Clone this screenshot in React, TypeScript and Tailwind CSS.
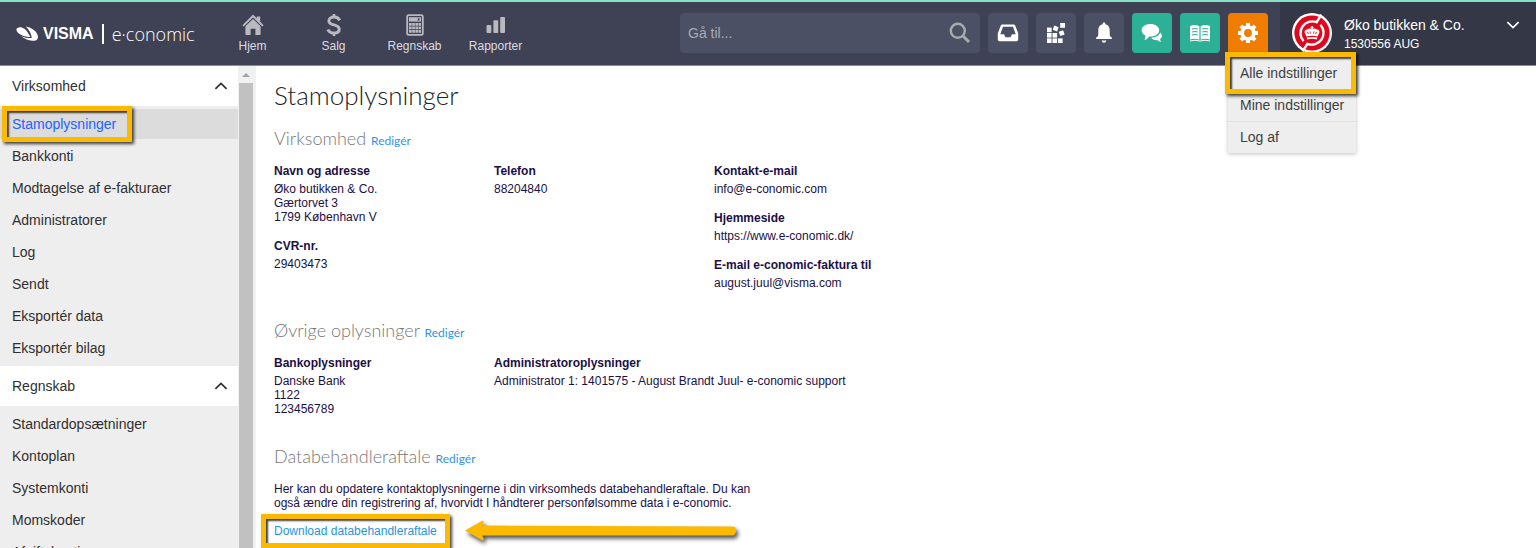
import React from "react";

type IconProps = { className?: string };

const HomeIcon = () => (
  <svg width="22" height="22" viewBox="0 0 22 22" fill="currentColor">
    <path d="M11 0.5 14.8 4.3V2.6H18.2V7.7L21.6 11.2 20.3 12.5 11 3.4 1.7 12.5 0.4 11.2Z" />
    <path d="M11 4.9 18.6 12.3V20.2Q18.6 21 17.8 21H13.4V14.8H8.6V21H4.2Q3.4 21 3.4 20.2V12.3Z" />
  </svg>
);

const DollarIcon = () => (
  <svg width="16" height="24" viewBox="0 0 16 24" fill="none" stroke="currentColor">
    <path
      d="M13.6 7.4C12.6 5.2 10.6 4.1 8 4.1C5 4.1 2.9 5.6 2.9 7.9C2.9 10.4 5 11.2 8 11.9C11.2 12.6 13.2 13.6 13.2 16.2C13.2 18.6 11 20 8 20C5 20 2.8 18.8 1.9 16.5"
      strokeWidth="3"
    />
    <path d="M8 1V4.5M8 19.5V23" strokeWidth="2.6" />
  </svg>
);

const CalculatorIcon = () => (
  <svg width="18" height="22" viewBox="0 0 18 22">
    <rect x="1.2" y="1.2" width="15.6" height="19.6" rx="1.6" fill="none" stroke="currentColor" strokeWidth="1.8" />
    <rect x="3" y="3.2" width="12" height="4.4" fill="currentColor" />
    <rect x="11.8" y="4.2" width="1.6" height="2.4" fill="#3f4154" />
    <g fill="currentColor">
      <path d="M3 9h2.7v2.7H3zM6.2 9h2.7v2.7H6.2zM9.4 9h2.7v2.7H9.4zM12.6 9H15v2.7h-2.4z" />
      <path d="M3 12.4h2.7v2.7H3zM6.2 12.4h2.7v2.7H6.2zM9.4 12.4h2.7v2.7H9.4zM12.6 12.4H15v2.7h-2.4z" />
      <path d="M3 15.8h2.7v2.9H3zM6.2 15.8h2.7v2.9H6.2zM9.4 15.8h2.7v2.9H9.4zM12.6 15.8H15v2.9h-2.4z" />
    </g>
  </svg>
);

const ChartIcon = () => (
  <svg width="20" height="18" viewBox="0 0 20 18" fill="currentColor">
    <rect x="0.5" y="9" width="4.8" height="8" rx="1" />
    <rect x="7.4" y="4.2" width="4.8" height="12.8" rx="1" />
    <rect x="14.2" y="1" width="4.8" height="16" rx="1" />
  </svg>
);

const SearchIcon = () => (
  <svg width="22" height="22" viewBox="0 0 22 22" fill="none" stroke="currentColor">
    <circle cx="8.8" cy="8.8" r="7" strokeWidth="2.4" />
    <path d="M13.8 13.8 20 20" strokeWidth="3" />
  </svg>
);

const InboxIcon = () => (
  <svg width="22" height="18" viewBox="0 0 22 18">
    <path
      d="M5.2 0.6H16.8Q17.8 0.6 18.2 1.5L21.2 9.2V15.4Q21.2 17.2 19.4 17.2H2.6Q0.8 17.2 0.8 15.4V9.2L3.8 1.5Q4.2 0.6 5.2 0.6ZM6 2.8 3.3 10.2H6.4Q7.2 10.2 7.5 11L8 12.4Q8.3 13.2 9 13.2H13Q13.7 13.2 14 12.4L14.5 11Q14.8 10.2 15.6 10.2H18.7L16 2.8Z"
      fill="currentColor"
      fillRule="evenodd"
    />
  </svg>
);

const AppsIcon = () => (
  <svg width="20" height="22" viewBox="0 0 20 22" fill="currentColor">
    <rect x="1" y="5.6" width="4.6" height="4.6" />
    <rect x="1" y="11" width="4.6" height="4.6" />
    <rect x="1" y="16.4" width="4.6" height="4.6" />
    <rect x="6.5" y="11" width="4.6" height="4.6" />
    <rect x="6.5" y="16.4" width="4.6" height="4.6" />
    <rect x="12" y="16.4" width="4.6" height="4.6" />
    <rect x="7.4" y="4.2" width="4.6" height="4.6" transform="rotate(20 9.7 6.5)" />
    <rect x="13.4" y="8.8" width="4.6" height="4.6" transform="rotate(-20 15.7 11.1)" />
    <rect x="14.2" y="1" width="4.8" height="4.8" />
  </svg>
);

const BellIcon = () => (
  <svg width="18" height="22" viewBox="0 0 18 22" fill="currentColor">
    <path d="M9 0.6C9.9 0.6 10.4 1.3 10.4 2.3C13.3 3 14.7 5.2 14.7 8.2V13Q14.7 14.6 16.8 15.6V17H1.2V15.6Q3.3 14.6 3.3 13V8.2C3.3 5.2 4.7 3 7.6 2.3C7.6 1.3 8.1 0.6 9 0.6Z" />
    <path d="M6.6 18.4H11.4Q10.8 20.8 9 20.8T6.6 18.4Z" />
  </svg>
);

const ChatIcon = () => (
  <svg width="22" height="20" viewBox="0 0 22 20" fill="currentColor">
    <path d="M9.4 1C14.3 1 18.2 3.7 18.2 7.3C18.2 10.9 14.3 13.6 9.4 13.6L8.4 13.5Q6.4 16.2 3.4 17.2Q4.6 15 4.4 12.6C2 11.4 0.6 9.5 0.6 7.3C0.6 3.7 4.5 1 9.4 1Z" />
    <path d="M19.2 9.6Q20.9 10.9 20.9 12.7C20.9 14.1 20.2 15.3 19 16.1Q19.1 17.6 20.2 18.9Q17.6 18.5 16.3 17.1C13.5 17.3 11.2 16.4 10.2 14.8C14.9 14.6 18.2 12.6 19.2 9.6Z" />
  </svg>
);

const BookIcon = () => (
  <svg width="22" height="18" viewBox="0 0 22 18">
    <path
      d="M1 2Q6 0 10.4 2.2V15.8Q6 14 1 15.6ZM21 2Q16 0 11.6 2.2V15.8Q16 14 21 15.6Z"
      fill="currentColor"
    />
    <path d="M1 17Q6 15.4 11 17Q16 15.4 21 17" fill="none" stroke="currentColor" />
    <path
      d="M3 5Q6 4 8.8 5M3 8Q6 7 8.8 8M3 11Q6 10 8.8 11M13.2 5Q16 4 19 5M13.2 8Q16 7 19 8M13.2 11Q16 10 19 11"
      fill="none"
      stroke="#2cb196"
      strokeWidth="1.1"
    />
  </svg>
);

const GearIcon = () => (
  <svg width="22" height="22" viewBox="0 0 22 22" fill="none" stroke="currentColor">
    <circle cx="11" cy="11" r="5.8" strokeWidth="3.8" />
    <path
      d="M11 1V4.4M11 17.6V21M1 11H4.4M17.6 11H21M3.9 3.9 6.3 6.3M15.7 15.7 18.1 18.1M3.9 18.1 6.3 15.7M15.7 6.3 18.1 3.9"
      strokeWidth="4"
    />
  </svg>
);

const Chevron: React.FC<IconProps> = ({ className }) => (
  <svg className={className} width="14" height="8" viewBox="0 0 14 8" fill="none" stroke="currentColor" strokeWidth="1.7">
    <path d="M1.4 6.8 7 1.4 12.6 6.8" />
  </svg>
);

const VismaMark = () => (
  <svg width="23" height="16" viewBox="0 0 23 16" fill="currentColor">
    <path d="M0.3 3.4C1.6 0.8 5.2 0.4 8.4 2.8C11.2 5 12.6 8 14.4 11C8.6 11 1 8.2 0.3 3.4Z" />
    <path d="M9.8 0.6C15 1.4 20.4 4.8 21.8 9.4C22.8 13.2 20 15.2 16.4 14.8C12 14.2 8 12.4 5.2 10.2C9 11.8 13 12.4 15.8 12C15.4 8 13.4 4 9.8 0.6Z" />
  </svg>
);

const CompanyLogo = () => (
  <svg width="40" height="40" viewBox="0 0 40 40">
    <circle cx="20" cy="20" r="20" fill="#fff" />
    <circle cx="20" cy="20" r="17.6" fill="#e2061c" />
    <path
      d="M29.4 1.6 24.6 9.2A11.8 11.8 0 0 0 11.6 28.2M10.6 38.4 15.4 30.8A11.8 11.8 0 0 0 28.4 11.8"
      fill="none"
      stroke="#fff"
      strokeWidth="2.4"
    />
    <path
      d="M14.4 23.4 12.6 19.4Q12.4 16.8 15 16.6Q17 15.2 19.2 15.8V14.8H18.4V14H19.2V13H20.8V14H21.6V14.8H20.8V15.8Q23 15.2 25 16.6Q27.6 16.8 27.4 19.4L25.6 23.4Q20 22 14.4 23.4Z"
      fill="#fff"
    />
    <path d="M14.8 24.6Q20 23.2 25.2 24.6L25 26.4Q20 25 15 26.4Z" fill="#fff" />
    <path
      d="M15.4 18.8 16.4 21M18 18.4 18.4 20.6M22 18.4 21.6 20.6M24.6 18.8 23.6 21"
      stroke="#e2061c"
      strokeWidth="0.9"
    />
  </svg>
);

const ArrowLeft = () => (
  <svg
    className="drop-shadow-[2px_3px_2px_rgba(0,0,0,0.7)]"
    width="274"
    height="22"
    viewBox="0 0 274 22"
    fill="#fbb900"
  >
    <path d="M0 10.5 17.5 0.6Q20 1 17.2 5.6L268 6.4Q271 6.4 271 10.6T268 15.6L17.2 15.4Q20 20 17.5 20.4Z" />
  </svg>
);

// Yellow frame drawn on top of whatever it surrounds
const Highlight: React.FC<IconProps> = ({ className }) => (
  <span
    className={`pointer-events-none absolute border-[5px] border-[#fbb900] shadow-[2px_2px_3px_rgba(0,0,0,0.75),inset_2px_2px_2px_rgba(0,0,0,0.75)] ${className}`}
  />
);

const navItems = [
  { label: "Hjem", icon: <HomeIcon /> },
  { label: "Salg", icon: <DollarIcon /> },
  { label: "Regnskab", icon: <CalculatorIcon /> },
  { label: "Rapporter", icon: <ChartIcon /> },
];

const actions = [
  { label: "Indbakke", icon: <InboxIcon />, color: "bg-[#4c5064]" },
  { label: "Apps", icon: <AppsIcon />, color: "bg-[#4c5064]" },
  { label: "Notifikationer", icon: <BellIcon />, color: "bg-[#4c5064]" },
  { label: "Chat", icon: <ChatIcon />, color: "bg-[#2cb196]" },
  { label: "Hjælp", icon: <BookIcon />, color: "bg-[#2cb196]" },
];

const sections = [
  {
    title: "Virksomhed",
    items: [
      "Stamoplysninger",
      "Bankkonti",
      "Modtagelse af e-fakturaer",
      "Administratorer",
      "Log",
      "Sendt",
      "Eksportér data",
      "Eksportér bilag",
    ],
  },
  {
    title: "Regnskab",
    items: [
      "Standardopsætninger",
      "Kontoplan",
      "Systemkonti",
      "Momskoder",
      "Afgiftskonti",
    ],
  },
];

const settings = ["Alle indstillinger", "Mine indstillinger", "Log af"];

const Header = () => (
  <header className="flex h-[66px] shrink-0 border-t-2 border-b border-t-[#85e2c6] border-b-[#8b8c97] bg-[#3f4154] text-white">
    <a href="#" className="flex w-[212px] shrink-0 items-center pl-4" aria-label="Visma e-conomic">
      <VismaMark />
      <span className="ml-1 text-[16px] leading-5 font-bold">VISMA</span>
      <span className="mx-2 h-5 w-[2px] bg-white" />
      <span className="font-['Open_Sans',sans-serif] text-[18px] leading-5 font-light">
        e·conomic
      </span>
    </a>
    <nav className="flex">
      {navItems.map((item) => (
        <a key={item.label} href="#" className="flex w-[81px] flex-col items-center pt-[11px]">
          <span className="flex h-6 items-center text-[#b9babf]">{item.icon}</span>
          <span className="mt-px text-[12px] leading-4 text-[#dcdce0]">{item.label}</span>
        </a>
      ))}
    </nav>
    <div className="ml-auto flex gap-2 pt-[11px]">
      <div className="relative">
        <input
          type="text"
          aria-label="Gå til"
          placeholder="Gå til..."
          className="h-10 w-[300px] rounded-[4px] bg-[#4c5064] px-2 text-[14px] text-white placeholder:text-[#a9aab2]"
        />
        <span className="absolute top-[9px] right-[9px] text-[#a9aaae]">
          <SearchIcon />
        </span>
      </div>
      {actions.map((action) => (
        <button
          key={action.label}
          type="button"
          aria-label={action.label}
          className={`flex h-10 w-10 items-center justify-center rounded-[4px] ${action.color}`}
        >
          {action.icon}
        </button>
      ))}
      <div className="relative">
        <button
          type="button"
          aria-label="Indstillinger"
          className="flex h-10 w-10 items-center justify-center rounded-t-[4px] bg-[#f07d00]"
        >
          <GearIcon />
        </button>
        <div className="absolute top-11 left-0 z-10 w-32 bg-[#eeeeee] text-[14px] text-[#404040] shadow-[0_1px_4px_rgba(0,0,0,0.25)]">
          {settings.map((item, index) => (
            <a
              key={item}
              href="#"
              className={`flex h-8 items-center pl-3 whitespace-nowrap ${
                index === 2 ? "border-t border-[#dfdfdf]" : ""
              }`}
            >
              {item}
            </a>
          ))}
          <Highlight className="-top-[5px] right-0 -left-[3px] h-[42px]" />
        </div>
      </div>
    </div>
    <div className="ml-3 flex w-64 shrink-0 bg-[#343846] pt-[11px] pl-3">
      <CompanyLogo />
      <div className="ml-3 pt-[2px]">
        <p className="text-[14px] leading-5">Øko butikken &amp; Co.</p>
        <p className="text-[12px] leading-[18px]">1530556 AUG</p>
      </div>
      <button type="button" aria-label="Vis konto" className="mr-4 ml-auto flex h-6 items-center">
        <Chevron className="rotate-180" />
      </button>
    </div>
  </header>
);

const Sidebar = () => (
  <aside className="flex w-64 shrink-0 overflow-hidden">
    <div className="w-[238px] bg-[#eeeeee] text-[14px] text-[#303030]">
      {sections.map((section) => (
        <section key={section.title}>
          <button type="button" className="flex h-10 w-full items-center justify-between bg-white pr-[10px] pl-3">
            {section.title}
            <Chevron />
          </button>
          <ul className="flex flex-col gap-[2px] py-[3px]">
            {section.items.map((item) => {
              const isActive = item === "Stamoplysninger";

              return (
                <li key={item} className="relative">
                  <a
                    href="#"
                    className={`flex h-[30px] items-center pl-3 ${
                      isActive ? "bg-[#dcdcdc] text-[#1f62ff]" : ""
                    }`}
                  >
                    {item}
                  </a>
                  {isActive && <Highlight className="-top-[3px] left-[2px] h-9 w-[130px]" />}
                </li>
              );
            })}
          </ul>
        </section>
      ))}
    </div>
    <div className="flex w-[18px] flex-col bg-[#f1f1f1] pr-[3px] pl-px">
      <svg className="shrink-0" width="14" height="17" viewBox="0 0 14 17" fill="#a3a3a3">
        <path d="M3 11 7 7 11 11Z" />
      </svg>
      <div className="flex-1 bg-[#c1c1c1]" />
    </div>
  </aside>
);

const SectionHeading: React.FC<{ title: string }> = ({ title }) => (
  <h2 className="mb-[11px] font-['Lato',sans-serif] text-[18px] leading-6 font-light text-[#777777]">
    {title}{" "}
    <a href="#" className="text-[12px] font-normal text-[#2f93e8]">
      Redigér
    </a>
  </h2>
);

const Field: React.FC<{ label: string; lines: string[] }> = ({ label, lines }) => (
  <div>
    <dt className="mb-1 font-bold">{label}</dt>
    {lines.map((line) => (
      <dd key={line}>{line}</dd>
    ))}
  </div>
);

const App = () => {
  return (
    <div className="flex h-screen flex-col overflow-hidden bg-white font-['Liberation_Sans',Arial,sans-serif]">
      <Header />
      <div className="flex min-h-0 flex-1">
        <Sidebar />
        <main className="flex-1 overflow-hidden px-[18px] pt-[14px] text-[12px] leading-[14px] text-[#1c0f45]">
          <h1 className="mb-4 font-['Lato',sans-serif] text-[26px] leading-[30px] font-light text-[#222222]">
            Stamoplysninger
          </h1>
          <div className="flex flex-col gap-7">
            <section>
              <SectionHeading title="Virksomhed" />
              <div className="grid grid-cols-[220px_220px_1fr]">
                <dl className="flex flex-col gap-[15px]">
                  <Field
                    label="Navn og adresse"
                    lines={["Øko butikken & Co.", "Gærtorvet 3", "1799 København V"]}
                  />
                  <Field label="CVR-nr." lines={["29403473"]} />
                </dl>
                <dl>
                  <Field label="Telefon" lines={["88204840"]} />
                </dl>
                <dl className="flex flex-col gap-[15px]">
                  <Field label="Kontakt-e-mail" lines={["info@e-conomic.com"]} />
                  <Field label="Hjemmeside" lines={["https://www.e-conomic.dk/"]} />
                  <Field label="E-mail e-conomic-faktura til" lines={["august.juul@visma.com"]} />
                </dl>
              </div>
            </section>
            <section>
              <SectionHeading title="Øvrige oplysninger" />
              <dl className="grid grid-cols-[220px_1fr]">
                <Field label="Bankoplysninger" lines={["Danske Bank", "1122", "123456789"]} />
                <Field
                  label="Administratoroplysninger"
                  lines={["Administrator 1: 1401575 - August Brandt Juul- e-conomic support"]}
                />
              </dl>
            </section>
            <section>
              <SectionHeading title="Databehandleraftale" />
              <p className="w-[490px]">
                Her kan du opdatere kontaktoplysningerne i din virksomheds databehandleraftale. Du kan
                også ændre din registrering af, hvorvidt I håndterer personfølsomme data i e-conomic.
              </p>
              <div className="mt-[10px] flex items-center gap-7">
                <div className="relative">
                  <a href="#" className="text-[#1e96dc]">
                    Download databehandleraftale
                  </a>
                  <Highlight className="-inset-x-[13px] -inset-y-[10px]" />
                </div>
                <ArrowLeft />
              </div>
            </section>
          </div>
        </main>
      </div>
    </div>
  );
};

export default App;
